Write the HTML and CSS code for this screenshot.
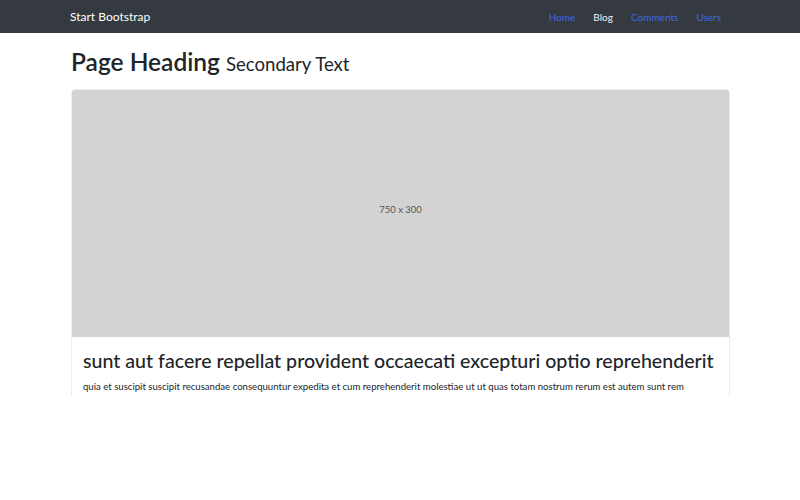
FILE: index.html
```html
<!DOCTYPE html>
<html lang="en">
<head>
<meta charset="utf-8">
<title>Start Bootstrap</title>
<link rel="stylesheet" href="styles.css">
</head>
<body>
<div class="page">
  <nav class="navbar">
    <div class="container nav-inner">
      <a class="brand" href="#">Start Bootstrap</a>
      <ul class="nav-links">
        <li><a class="nav-link" href="#">Home</a></li>
        <li><a class="nav-link active" href="#">Blog</a></li>
        <li><a class="nav-link" href="#">Comments</a></li>
        <li><a class="nav-link" href="#">Users</a></li>
      </ul>
    </div>
  </nav>
  <main class="container">
    <h1 class="heading">Page Heading <small>Secondary Text</small></h1>
    <div class="card">
      <div class="card-img">750 x 300</div>
      <div class="card-body">
        <h2 class="card-title">sunt aut facere repellat provident occaecati excepturi optio reprehenderit</h2>
        <p class="card-text">quia et suscipit suscipit recusandae consequuntur expedita et cum reprehenderit molestiae ut ut quas totam nostrum rerum est autem sunt rem</p>
      </div>
    </div>
  </main>
</div>
</body>
</html>
```

FILE: styles.css
```css
* { box-sizing: border-box; }
html, body { margin: 0; padding: 0; background: #fff; }
body {
  font-family: "Lato", "Open Sans", sans-serif;
  color: #212529;
}
.page {
  height: 396px;
  overflow: hidden;
}
.container {
  width: 660px;
  margin: 0 auto;
}
.navbar {
  background: #343a40;
  height: 33px;
}
.nav-inner {
  display: flex;
  align-items: center;
  justify-content: space-between;
  height: 33px;
}
.brand {
  color: #fff;
  text-decoration: none;
  font-size: 12px;
  line-height: 16px;
}
.nav-links {
  list-style: none;
  margin: 0;
  padding: 0 9px 0 0;
  display: flex;
  gap: 18px;
}
.nav-link {
  display: block;
  color: #4169e1;
  text-decoration: none;
  font-size: 10px;
  font-weight: 400;
  line-height: 16px;
}
.nav-link.active { color: #f2f2f2; }
.heading {
  margin: 12px 0 8px 1px;
  font-size: 24.5px;
  font-weight: 600;
  line-height: 34px;
}
.heading small {
  font-size: 18.6px;
  font-weight: 400;
}
.card {
  margin-left: 1px;
  border: 1px solid #ececec;
  border-radius: 4px;
}
.card-img {
  height: 247px;
  padding-bottom: 8px;
  background: #d3d3d3;
  border-radius: 3px 3px 0 0;
  display: flex;
  align-items: center;
  justify-content: center;
  font-size: 9.5px;
  color: #555;
}
.card-body {
  padding: 11px 11px;
}
.card-title {
  margin: 0 0 6px;
  font-size: 19.6px;
  font-weight: 500;
  line-height: 26px;
  white-space: nowrap;
}
.card-text {
  margin: 0;
  font-size: 9.6px;
  line-height: 14px;
}
```
